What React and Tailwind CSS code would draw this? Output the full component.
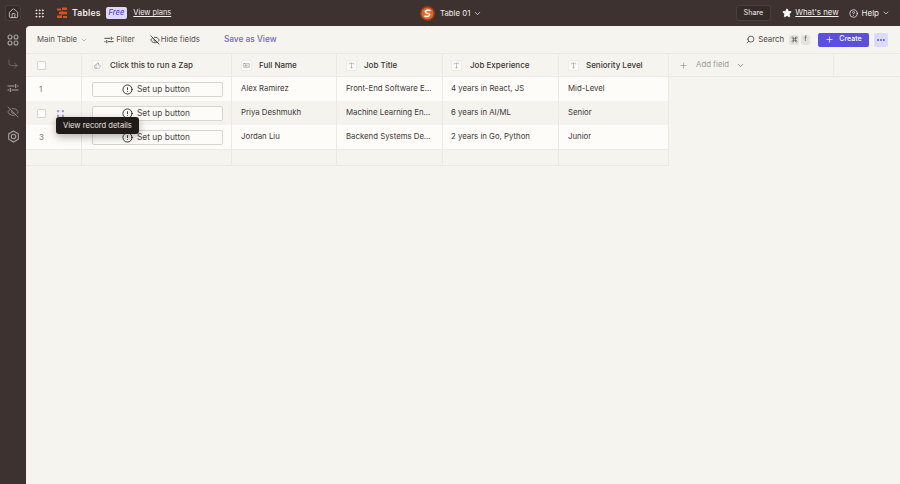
import { ChevronDown, Grip, House, Plus, Search, Star, CircleHelp, CircleAlert, EyeOff, Ellipsis, CornerDownRight, ThumbsUp, Type, IdCard, Command } from 'lucide-react'

const rows = [
  { id: '1', name: 'Alex Ramirez', title: 'Front-End Software Engineer', exp: '4 years in React, JS', level: 'Mid-Level' },
  { id: '', name: 'Priya Deshmukh', title: 'Machine Learning Engineer', exp: '6 years in AI/ML', level: 'Senior', hover: true },
  { id: '3', name: 'Jordan Liu', title: 'Backend Systems Developer', exp: '2 years in Go, Python', level: 'Junior' },
]

const grid = 'grid grid-cols-[56px_150px_105px_106px_116px_110px_165px_1fr]'

function Logo() {
  return (
    <svg width="10" height="12" viewBox="0 0 10 12" fill="#d9541e">
      <path d="M5 0.5h5v2.4H5zM0 1.5h4v2H0zM2 4.8h8v2.4H2zM0 8.5h5v2.4H0zM6 9h4v2H6z" />
      <path d="M4 3.5l2 1.3-1 1zM4 7.2l2 0-1.5 1.3z" />
    </svg>
  )
}

function ZapBadge() {
  return (
    <svg width="15" height="15" viewBox="0 0 15 15" fill="none">
      <circle cx="7.5" cy="7.5" r="7.5" fill="#8f3d18" />
      <circle cx="7.5" cy="7.5" r="6" fill="#dc6a2e" />
      <path d="M10.5 4.6C8.6 3.8 5 4.2 5.4 6.2 5.8 8 9.8 7 9.7 8.8 9.6 10.6 6.4 10.9 4.4 10" stroke="#fff" strokeWidth="1.5" />
    </svg>
  )
}

function RecordIcon() {
  return (
    <svg width="9" height="9" viewBox="0 0 9 9" fill="#5b4fe0" opacity="0.55">
      <rect x="1" y="1" width="2.2" height="2.2" rx="0.6" />
      <rect x="5.8" y="1" width="2.2" height="2.2" rx="0.6" />
      <rect x="1" y="5.8" width="2.2" height="2.2" rx="0.6" />
      <rect x="5.8" y="5.8" width="2.2" height="2.2" rx="0.6" />
    </svg>
  )
}

function AppsIcon() {
  return (
    <svg width="12" height="12" viewBox="0 0 12 12" fill="none" stroke="currentColor" strokeWidth="1.1">
      <circle cx="3" cy="3" r="2" />
      <circle cx="9" cy="3" r="2" />
      <circle cx="3" cy="9" r="2" />
      <circle cx="9" cy="9" r="2" />
    </svg>
  )
}

function TwoSliders({ size = 12 }) {
  return (
    <svg width={size} height={size} viewBox="0 0 12 12" fill="none" stroke="currentColor" strokeWidth="1.1">
      <path d="M0.5 4h7M10 4h1.5M8.7 2v4M0.5 8h1.5M4.5 8h7M3.3 6v4" />
    </svg>
  )
}

function HexGear() {
  return (
    <svg width="13" height="13" viewBox="0 0 13 13" fill="none" stroke="currentColor" strokeWidth="1.1">
      <path d="M6.5 1l4.8 2.75v5.5L6.5 12 1.7 9.25v-5.5z" />
      <circle cx="6.5" cy="6.5" r="2.2" />
    </svg>
  )
}

function FieldIcon({ children }) {
  return (
    <span className="w-[11px] h-[11px] rounded-[2px] bg-[#fdfcfa] border border-[#ecebe5] flex items-center justify-center text-[#6b6763] shrink-0">
      {children}
    </span>
  )
}

function HeadCell({ icon, label, gap = 'gap-[7px]', pad = 'pl-[9px]' }) {
  return (
    <div className={`flex items-center ${gap} ${pad} border-r border-[#ebe9e2] text-[8px] font-medium text-[#3a3532]`}>
      <FieldIcon>{icon}</FieldIcon>
      <span className="whitespace-nowrap">{label}</span>
    </div>
  )
}

function Cell({ children, hover, pad = 'pl-[9px]' }) {
  return (
    <div className={`flex items-center min-w-0 ${pad} pr-[9px] border-r border-[#ebe9e2] text-[7.8px] text-[#3f3a37] ${hover ? 'bg-[#f5f3ee]' : 'bg-[#fdfcf9]'}`}>
      <span className="truncate">{children}</span>
    </div>
  )
}

export default function App() {
  return (
    <div className="w-[900px] h-[484px] overflow-hidden bg-[#3d3230] flex flex-col font-['Inter',sans-serif]">
      <header className="h-[26px] shrink-0 flex items-center relative text-[#f2eeea]">
        <div className="ml-[5px] w-[16px] h-[16px] rounded-[3px] bg-[#352b29] border border-[#4a3f3c] flex items-center justify-center">
          <House size={11} strokeWidth={1.5} />
        </div>
        <Grip size={11} strokeWidth={2} className="ml-[13px]" />
        <span className="ml-[12px]"><Logo /></span>
        <span className="ml-[5px] text-[8.6px] font-semibold tracking-[0.2px]">Tables</span>
        <span className="ml-[5px] h-[12px] px-[3px] rounded-[2px] bg-[#ded9fb] text-[#4f3fd0] text-[7.5px] font-medium italic flex items-center">Free</span>
        <span className="ml-[6px] text-[7.4px] underline">View plans</span>

        <div className="absolute left-[420px] top-[6px] flex items-center">
          <ZapBadge />
          <span className="ml-[5px] text-[7.8px]">Table 01</span>
          <ChevronDown size={9} className="ml-[3px]" />
        </div>

        <div className="ml-auto flex items-center">
          <span className="h-[16px] px-[7px] rounded-[3px] bg-[#352b29] border border-[#4a3f3c] text-[7.2px] flex items-center">Share</span>
          <Star size={10} fill="currentColor" className="ml-[11px] text-white" />
          <span className="ml-[3px] text-[7.8px] underline">What's new</span>
          <CircleHelp size={9} className="ml-[10px]" />
          <span className="ml-[4px] text-[8px]">Help</span>
          <ChevronDown size={8} className="ml-[3px] mr-[10px]" />
        </div>
      </header>

      <div className="flex-1 flex min-h-0">
        <nav className="w-[26px] shrink-0 flex flex-col items-center pt-[8px] gap-[12px] text-[#a8a29d]">
          <AppsIcon />
          <CornerDownRight size={12} strokeWidth={1.2} className="text-[#8c8581]" />
          <TwoSliders />
          <EyeOff size={12} strokeWidth={1.4} />
          <HexGear />
        </nav>

        <main className="flex-1 min-w-0 bg-[#f6f4ef] rounded-tl-[4px] flex flex-col relative">
          <div className="h-[27px] shrink-0 flex items-center text-[7.8px] text-[#57524e]">
            <span className="ml-[11px]">Main Table</span>
            <ChevronDown size={8} className="ml-[3px] text-[#a09b96]" />
            <span className="ml-[16px] text-[#3f3a37]"><TwoSliders size={10} /></span>
            <span className="ml-[2px]">Filter</span>
            <EyeOff size={10} className="ml-[15px] text-[#3f3a37]" />
            <span className="ml-[1px]">Hide fields</span>
            <span className="ml-[24px] text-[8.3px] font-medium text-[#7167d3]">Save as View</span>
            <div className="ml-auto flex items-center">
              <Search size={9} className="text-[#3f3a37] -scale-x-100" />
              <span className="ml-[3px] text-[#4b4643]">Search</span>
              <span className="ml-[5px] w-[10px] h-[10px] rounded-[2px] bg-[#e6e3dd] flex items-center justify-center">
                <Command size={7} />
              </span>
              <span className="ml-[2px] w-[9px] h-[10px] rounded-[2px] bg-[#e6e3dd] flex items-center justify-center text-[7px]">f</span>
              <span className="ml-[8px] w-[51px] h-[14px] rounded-[2px] bg-[#5b4fe0] text-white text-[7px] font-medium flex items-center justify-center gap-[5px]">
                <Plus size={9} strokeWidth={2} />
                Create
              </span>
              <span className="ml-[5px] mr-[12px] w-[14px] h-[14px] rounded-[2px] bg-[#dcdafa] flex items-center justify-center text-[#5b4fe0]">
                <Ellipsis size={10} strokeWidth={2.5} />
              </span>
            </div>
          </div>

          <div className="flex flex-col">
            <div className={`${grid} h-[24px] border-t border-b border-[#ebe9e2]`}>
              <div className="flex items-center pl-[11px] border-r border-[#ebe9e2]">
                <span className="w-[9px] h-[9px] rounded-[1px] border border-[#d8d5cf] bg-[#fdfcfa]" />
              </div>
              <HeadCell icon={<ThumbsUp size={7} strokeWidth={1.3} />} label="Click this to run a Zap" pad="pl-[10px]" />
              <HeadCell icon={<IdCard size={7} strokeWidth={1.3} />} label="Full Name" pad="pl-[9px]" />
              <HeadCell icon={<Type size={7} strokeWidth={1.3} />} label="Job Title" />
              <HeadCell icon={<Type size={7} strokeWidth={1.3} />} label="Job Experience" gap="gap-[8px]" pad="pl-[8px]" />
              <HeadCell icon={<Type size={7} strokeWidth={1.3} />} label="Seniority Level" />
              <div className="flex items-center pl-[10px] border-r border-[#ebe9e2] text-[7.8px] text-[#a09b96]">
                <Plus size={9} />
                <span className="ml-[8px]">Add field</span>
                <ChevronDown size={9} className="ml-[7px] text-[#77726e]" />
              </div>
              <div />
            </div>

            {rows.map((row) => (
              <div key={row.name} className={`${grid} h-[24px]`}>
                <div className={`flex items-center pl-[13px] border-r border-[#ebe9e2] text-[8px] text-[#827d78] ${row.hover ? 'bg-[#f5f3ee]' : 'bg-[#fdfcf9]'}`}>
                  {row.hover ? (
                    <span className="-ml-[2px] flex items-center">
                      <span className="w-[9px] h-[9px] rounded-[1px] border border-[#d8d5cf] bg-[#fdfcfa]" />
                      <span className="ml-[10px] flex"><RecordIcon /></span>
                    </span>
                  ) : row.id}
                </div>
                <div className={`flex items-center justify-center border-r border-[#ebe9e2] ${row.hover ? 'bg-[#f5f3ee]' : 'bg-[#fdfcf9]'}`}>
                  <div className="ml-[1px] w-[131px] h-[15px] rounded-[2px] border border-[#d8d5cf] bg-[#fdfcf9] flex items-center justify-center gap-[4px] pr-[2px] text-[8.4px] text-[#4b4643]">
                    <CircleAlert size={11} className="text-[#2d2926]" />
                    Set up button
                  </div>
                </div>
                <Cell hover={row.hover}>{row.name}</Cell>
                <Cell hover={row.hover}>{row.title}</Cell>
                <Cell hover={row.hover} pad="pl-[8px]">{row.exp}</Cell>
                <Cell hover={row.hover}>{row.level}</Cell>
              </div>
            ))}

            <div className={`${grid} h-[17px]`}>
              {[0, 1, 2, 3, 4, 5].map((i) => (
                <div key={i} className="border-t border-r border-b border-[#ebe9e2]" />
              ))}
            </div>
          </div>

          <div className="absolute left-[30px] top-[91px] h-[17px] px-[7px] rounded-[3px] bg-[#201a18] text-[#e9e5e1] text-[7.6px] flex items-center whitespace-nowrap shadow-[0_3px_8px_rgba(0,0,0,0.3)]">
            View record details
          </div>
        </main>
      </div>
    </div>
  )
}
